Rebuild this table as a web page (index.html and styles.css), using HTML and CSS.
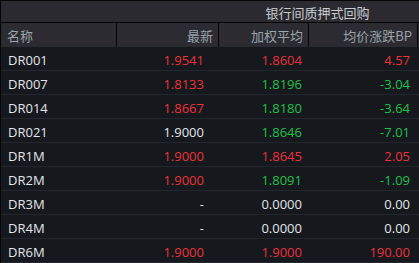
FILE: index.html
```html
<!DOCTYPE html>
<html lang="zh">
<head>
<meta charset="utf-8">
<link rel="stylesheet" href="styles.css">
</head>
<body>
<div class="panel">
  <div class="top">
    <div class="top-blank"></div>
    <div class="top-title">银行间质押式回购</div>
  </div>
  <div class="head">
    <div class="hc c1 left">名称</div>
    <div class="hc c2">最新</div>
    <div class="hc c3">加权平均</div>
    <div class="hc c4">均价涨跌BP</div>
  </div>
  <div class="body">
    <div class="row"><div class="c1 name">DR001</div><div class="c2 val red">1.9541</div><div class="c3 val red">1.8604</div><div class="c4 val red">4.57</div></div>
    <div class="row"><div class="c1 name">DR007</div><div class="c2 val red">1.8133</div><div class="c3 val green">1.8196</div><div class="c4 val green">-3.04</div></div>
    <div class="row"><div class="c1 name">DR014</div><div class="c2 val red">1.8667</div><div class="c3 val green">1.8180</div><div class="c4 val green">-3.64</div></div>
    <div class="row"><div class="c1 name">DR021</div><div class="c2 val white">1.9000</div><div class="c3 val green">1.8646</div><div class="c4 val green">-7.01</div></div>
    <div class="row"><div class="c1 name">DR1M</div><div class="c2 val red">1.9000</div><div class="c3 val red">1.8645</div><div class="c4 val red">2.05</div></div>
    <div class="row"><div class="c1 name">DR2M</div><div class="c2 val red">1.9000</div><div class="c3 val green">1.8091</div><div class="c4 val green">-1.09</div></div>
    <div class="row"><div class="c1 name">DR3M</div><div class="c2 val white">-</div><div class="c3 val white">0.0000</div><div class="c4 val white">0.00</div></div>
    <div class="row"><div class="c1 name">DR4M</div><div class="c2 val white">-</div><div class="c3 val white">0.0000</div><div class="c4 val white">0.00</div></div>
    <div class="row"><div class="c1 name">DR6M</div><div class="c2 val red">1.9000</div><div class="c3 val red">1.9000</div><div class="c4 val red">190.00</div></div>
  </div>
</div>
</body>
</html>
```
FILE: styles.css
```css
html, body {
  margin: 0;
  padding: 0;
  background: #15181d;
}
.panel {
  width: 419px;
  height: 263px;
  overflow: hidden;
  font-family: "Open Sans", "Noto Sans CJK SC", sans-serif;
  font-size: 13px;
  border-left: 1px solid #050506;
  box-sizing: border-box;
}
.top {
  display: flex;
  height: 23px;
  box-sizing: border-box;
  border-top: 1px solid #050506;
  border-bottom: 1px solid #050506;
  background: #2a2a30;
}
.top-blank { width: 217px; }
.top-title {
  width: 199px;
  text-align: center;
  color: #c9cbce;
  font-family: "Noto Sans CJK SC", sans-serif;
  line-height: 21px;
  padding-top: 1px;
}
.head {
  display: flex;
  height: 24px;
  background: #2b2b31;
}
.hc {
  box-sizing: border-box;
  border-right: 1px solid #050506;
  color: #9ba3ab;
  font-family: "Noto Sans CJK SC", sans-serif;
  text-align: right;
  line-height: 24px;
  padding: 1px 5px 0 6px;
}
.hc.left { text-align: left; }
.c1 { width: 116px; }
.c2 { width: 102px; }
.c3 { width: 90px; }
.c4 { width: 109px; }
.hc.c2 { padding-right: 5px; }
.body { background: #15181d; }
.row {
  display: flex;
  height: 24px;
  box-sizing: border-box;
  border-bottom: 1px solid #23262c;
}
.row > div {
  box-sizing: border-box;
  line-height: 23px;
  padding-top: 2px;
}
.name {
  color: #e3e6ea;
  padding-left: 7px;
}
.val { text-align: right; }
.c2.val { padding-right: 15px; }
.c3.val { padding-right: 7px; }
.c4.val { padding-right: 8px; }
.red { color: #f0303c; }
.green { color: #22c04a; }
.white { color: #e3e6ea; }
```
